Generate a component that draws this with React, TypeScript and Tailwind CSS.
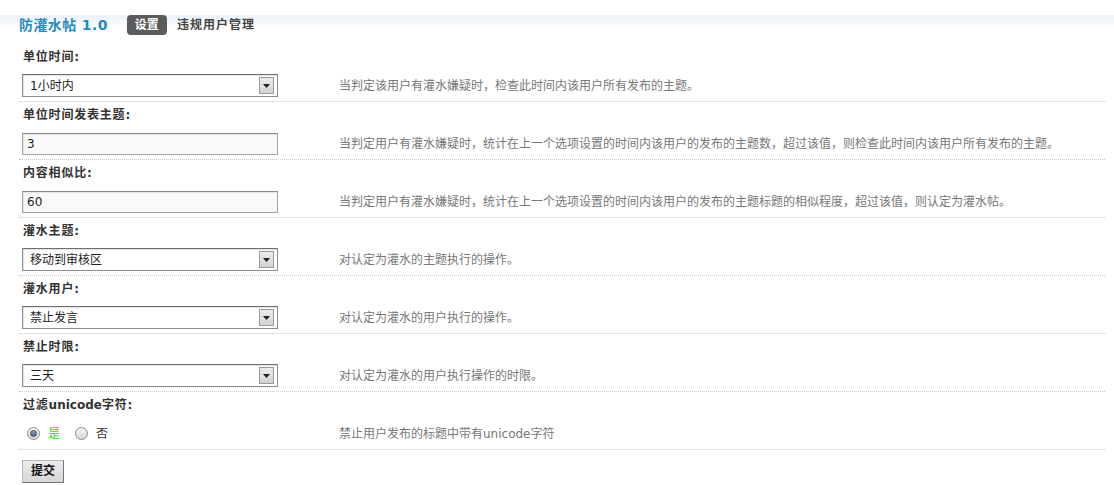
import React from "react";

const FONT = { fontFamily: '"DejaVu Sans", "Noto Sans CJK SC", sans-serif' };

function SelectBox({ value }: { value: string }) {
  return (
    <div className="flex h-[23px] w-[256px] items-center justify-between border border-[#8e8e8e] border-t-[#6f6f6f] bg-white pl-[7px] pr-[3px] shadow-[inset_1px_1px_1px_rgba(0,0,0,0.12)]">
      <span className="text-[12px] leading-none text-[#222]">{value}</span>
      <span className="flex h-[17px] w-[15px] items-center justify-center border border-[#9a9a9a] bg-gradient-to-b from-[#ececec] to-[#d2d2d2]">
        <svg width="7" height="4" viewBox="0 0 7 4">
          <path d="M0 0 H7 L3.5 4 Z" fill="#222" />
        </svg>
      </span>
    </div>
  );
}

function TextBox({ value }: { value: string }) {
  return (
    <div className="flex h-[22px] w-[256px] items-center border border-[#a5a5a5] border-t-[#8a8a8a] bg-[#f9f9f9] pl-[4px] shadow-[inset_1px_1px_1px_rgba(0,0,0,0.08)]">
      <span className="text-[12px] leading-none text-[#222]">{value}</span>
    </div>
  );
}

function Radio({ checked }: { checked: boolean }) {
  return (
    <span className="flex h-[13px] w-[13px] items-center justify-center rounded-full border border-[#8a8a8a] bg-gradient-to-b from-[#f4f4f4] to-[#d8d8d8]">
      {checked && (
        <span className="h-[7px] w-[7px] rounded-full border border-[#3c4a60] bg-gradient-to-b from-[#8ea2c0] to-[#4d6384]" />
      )}
    </span>
  );
}

function Row({
  label,
  control,
  desc,
}: {
  label: React.ReactNode;
  control: React.ReactNode;
  desc: string;
}) {
  return (
    <div className="pt-[4px] pb-[4px] border-b border-dotted border-[#c9c9c9]">
      <div className="flex h-[18px] items-center pl-[4px] text-[12px] font-bold text-[#333] tracking-[0.8px]">
        {label}
      </div>
      <div className="mt-[8px] flex h-[23px] items-center">
        <div className="w-[320px] shrink-0 pl-[3px]">{control}</div>
        <div className="text-[12px] text-[#777]">{desc}</div>
      </div>
    </div>
  );
}

export default function App() {
  return (
    <div
      style={FONT}
      className="min-h-[485px] w-full bg-[linear-gradient(to_bottom,#e9f1f9_0px,#ffffff_13px)] pl-[19px] pr-[9px]"
    >
      <div className="flex h-[20px] items-center mt-[15px] mb-[9px]">
        <span className="text-[14px] font-bold text-[#1e8bc3] tracking-[0.4px]">防灌水帖 1.0</span>
        <span className="ml-[19px] flex h-[20px] w-[40px] items-center justify-center rounded-[4px] bg-[#5b5b5b] text-[12px] font-bold text-white">
          设置
        </span>
        <span className="ml-[10px] text-[12px] font-bold text-[#444] tracking-[1px]">违规用户管理</span>
      </div>

      <Row
        label="单位时间:"
        control={<SelectBox value="1小时内" />}
        desc="当判定该用户有灌水嫌疑时，检查此时间内该用户所有发布的主题。"
      />
      <Row
        label="单位时间发表主题:"
        control={<TextBox value="3" />}
        desc="当判定用户有灌水嫌疑时，统计在上一个选项设置的时间内该用户的发布的主题数，超过该值，则检查此时间内该用户所有发布的主题。"
      />
      <Row
        label="内容相似比:"
        control={<TextBox value="60" />}
        desc="当判定用户有灌水嫌疑时，统计在上一个选项设置的时间内该用户的发布的主题标题的相似程度，超过该值，则认定为灌水帖。"
      />
      <Row
        label="灌水主题:"
        control={<SelectBox value="移动到审核区" />}
        desc="对认定为灌水的主题执行的操作。"
      />
      <Row
        label="灌水用户:"
        control={<SelectBox value="禁止发言" />}
        desc="对认定为灌水的用户执行的操作。"
      />
      <Row
        label="禁止时限:"
        control={<SelectBox value="三天" />}
        desc="对认定为灌水的用户执行操作的时限。"
      />
      <Row
        label={
          <>
            过滤<span className="tracking-normal">unicode</span>字符:
          </>
        }
        control={
          <div className="flex items-center pl-[5px] text-[12px]">
            <Radio checked />
            <span className="ml-[8px] text-[#2fd62f]">是</span>
            <span className="ml-[15px]">
              <Radio checked={false} />
            </span>
            <span className="ml-[8px] text-[#333]">否</span>
          </div>
        }
        desc="禁止用户发布的标题中带有unicode字符"
      />

      <div className="pt-[8px] pl-[3px]">
        <button className="h-[23px] w-[42px] border border-[#b5b5b5] border-r-[#777] border-b-[#777] bg-gradient-to-b from-[#ececec] to-[#d6d6d6] text-[12px] font-bold text-[#111]">
          提交
        </button>
      </div>
    </div>
  );
}
